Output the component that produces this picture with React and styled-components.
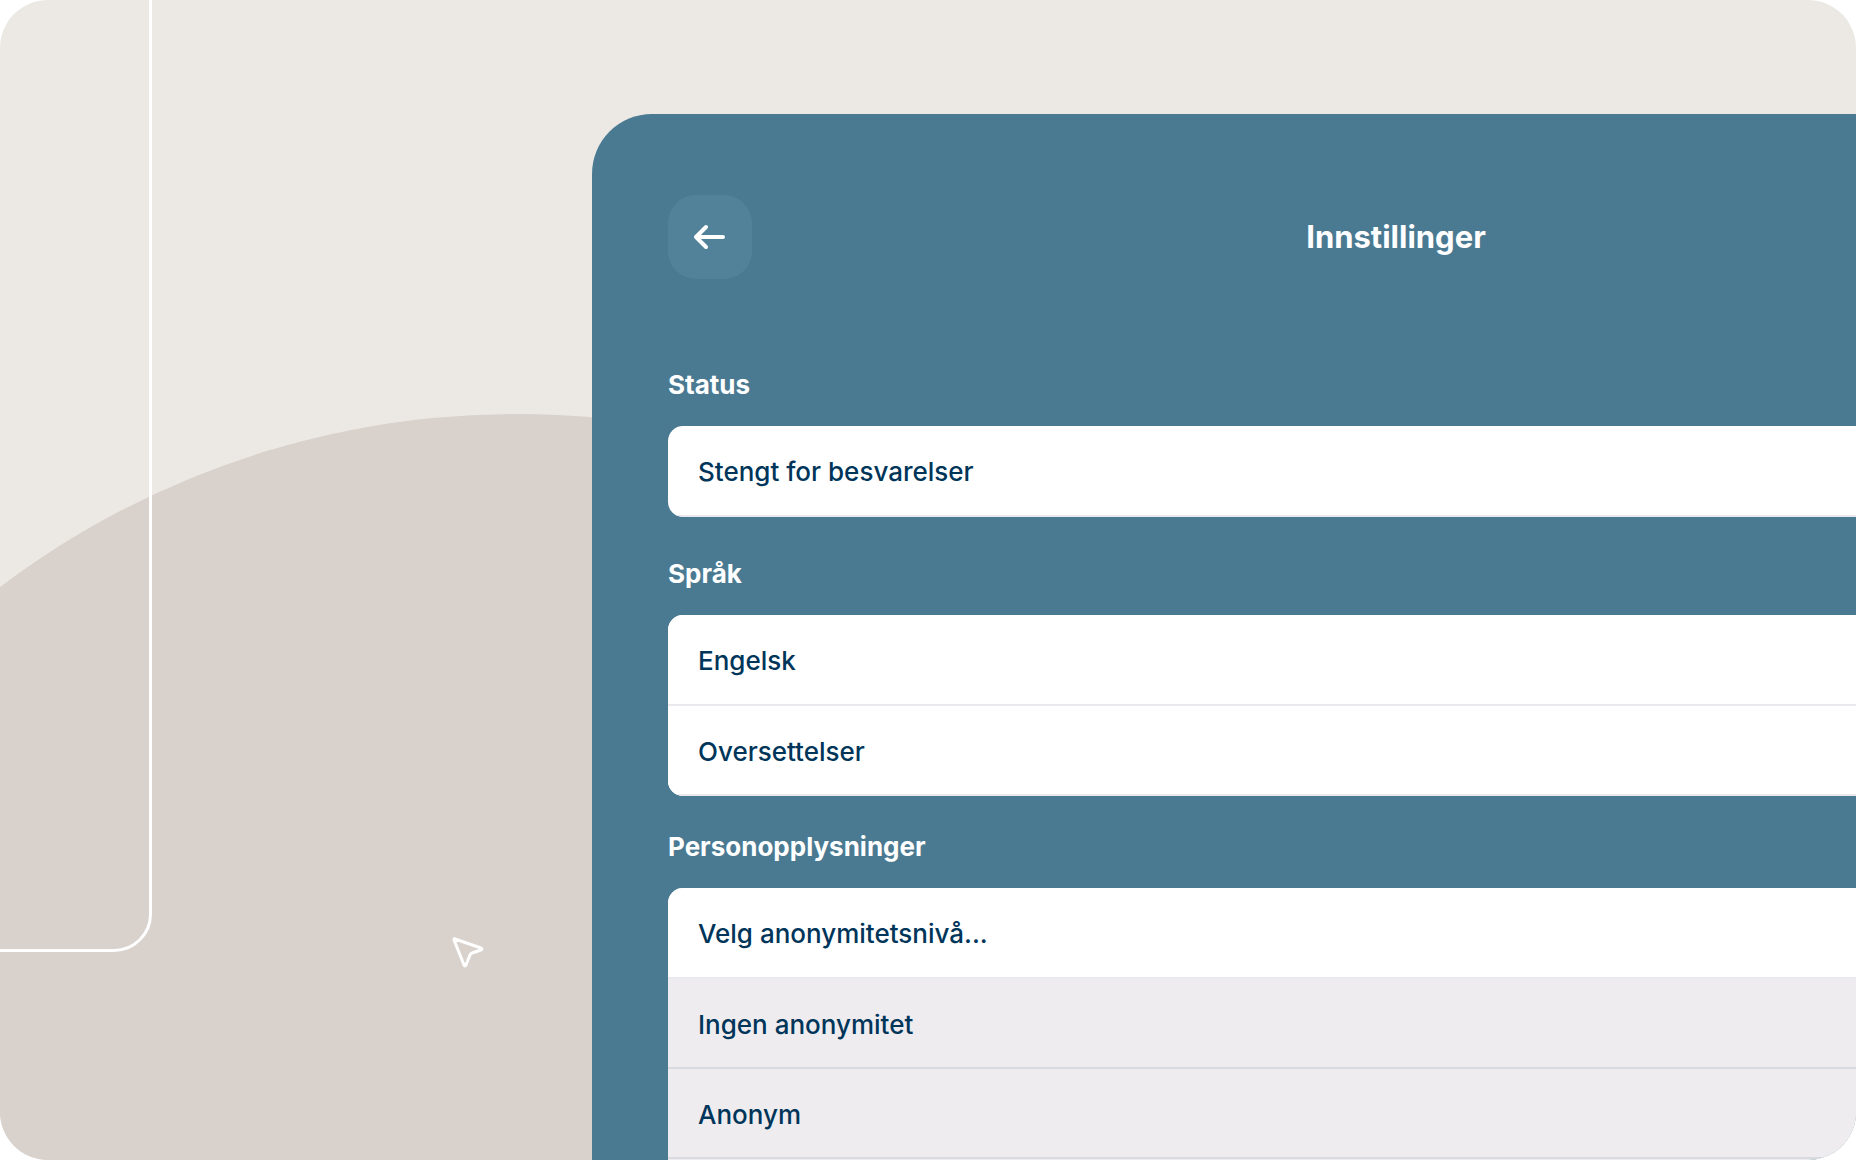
import styled, { createGlobalStyle } from "styled-components";

const sections = [
  { title: "Status", rows: [{ label: "Stengt for besvarelser" }] },
  { title: "Språk", rows: [{ label: "Engelsk" }, { label: "Oversettelser" }] },
  {
    title: "Personopplysninger",
    last: true,
    rows: [
      { label: "Velg anonymitetsnivå..." },
      { label: "Ingen anonymitet", muted: true },
      { label: "Anonym", muted: true },
    ],
  },
];

const App = () => {
  return (
    <>
      <GlobalStyle />
      <Frame>
        <Circle />
        <Outline />
        <Pointer viewBox="0 0 36 36" aria-hidden="true">
          <path d="M5 5 L31 14 Q33 15 31 16 L22 19 Q21 19 20 21 L16 31 Q15 33 14 31 L4 6 Q4 4 5 5 Z" />
        </Pointer>
        <Panel>
          <Header>
            <BackButton type="button" aria-label="Tilbake">
              <Arrow viewBox="0 0 34 28" aria-hidden="true">
                <path d="M30 14 H3 M13 4 L3 14 L13 24" />
              </Arrow>
            </BackButton>
            <Title>Innstillinger</Title>
          </Header>
          {sections.map((section) => (
            <Section key={section.title} $last={section.last}>
              <SectionTitle>{section.title}</SectionTitle>
              <Card $last={section.last}>
                {section.rows.map((row) => (
                  <Item key={row.label}>
                    <Row type="button" $muted={row.muted}>
                      {row.label}
                    </Row>
                  </Item>
                ))}
              </Card>
            </Section>
          ))}
        </Panel>
      </Frame>
    </>
  );
};

const GlobalStyle = createGlobalStyle`
  * {
    box-sizing: border-box;
  }

  body {
    margin: 0;
    background: #fff;
    font-family: Inter, "Liberation Sans", sans-serif;
  }
`;

const Frame = styled.main`
  position: relative;
  display: grid;
  grid-template-columns: 37fr 79fr;
  height: 100vh;
  overflow: hidden;
  border-radius: 48px;
  background: #ece9e4;
`;

//background decoration, sits behind the panel
const Circle = styled.div`
  position: absolute;
  top: 414px;
  left: -340px;
  width: 1712px;
  height: 1712px;
  border-radius: 50%;
  background: #d9d1cc;
`;

const Outline = styled.div`
  position: absolute;
  top: -60px;
  left: -60px;
  width: 212px;
  height: 1012px;
  border: 3px solid #fff;
  border-radius: 38px;
`;

const Pointer = styled.svg`
  position: absolute;
  top: 934px;
  left: 450px;
  width: 36px;
  height: 36px;
  fill: none;
  stroke: #fff;
  stroke-width: 3;
  stroke-linejoin: round;
`;

//runs out past the right side of the frame
const Panel = styled.section`
  position: relative;
  grid-column: 2;
  margin: 114px -344px 0 0;
  padding: 81px 76px 0;
  border-radius: 60px 0 0 0;
  background: #4a7a92;
`;

const Header = styled.header`
  display: grid;
  grid-template-columns: 1fr auto 1fr;
  align-items: center;
  margin-bottom: 89px;
`;

const BackButton = styled.button`
  display: flex;
  justify-content: center;
  align-items: center;
  width: 84px;
  height: 84px;
  padding: 0;
  border: none;
  border-radius: 28px;
  background: #52829a;
  cursor: pointer;
`;

const Arrow = styled.svg`
  width: 34px;
  height: 28px;
  fill: none;
  stroke: #fff;
  stroke-width: 4;
  stroke-linecap: round;
  stroke-linejoin: round;
`;

const Title = styled.h1`
  margin: 0;
  color: #fff;
  font-size: 31px;
  font-weight: 700;
  line-height: 40px;
`;

const Section = styled.section`
  margin-bottom: 40px;
  margin-top: ${(props) => (props.$last ? "-6px" : "0")};
`;

const SectionTitle = styled.h2`
  margin: 0 0 24px;
  color: #fff;
  font-size: 26px;
  font-weight: 700;
  line-height: 34px;
`;

//the last card carries on below the frame, so it has no bottom corners
const Card = styled.ul`
  margin: 0;
  padding: 0 0 ${(props) => (props.$last ? "40px" : "0")};
  overflow: hidden;
  border-radius: ${(props) => (props.$last ? "15px 15px 0 0" : "15px")};
  background: ${(props) => (props.$last ? "#eeecef" : "#fff")};
  list-style: none;
`;

const Row = styled.button`
  display: block;
  width: 100%;
  height: 100%;
  padding: 0 30px;
  border: none;
  background: ${(props) => (props.$muted ? "#eeecef" : "#fff")};
  box-shadow: inset 0 -2px ${(props) => (props.$muted ? "#d9dadf" : "#e9e9ee")};
  color: #00355a;
  font-family: inherit;
  font-size: 26px;
  font-weight: 500;
  text-align: left;
  cursor: pointer;
`;

const Item = styled.li`
  height: 91px;

  & + & {
    height: 90px;
  }
`;

export default App;
